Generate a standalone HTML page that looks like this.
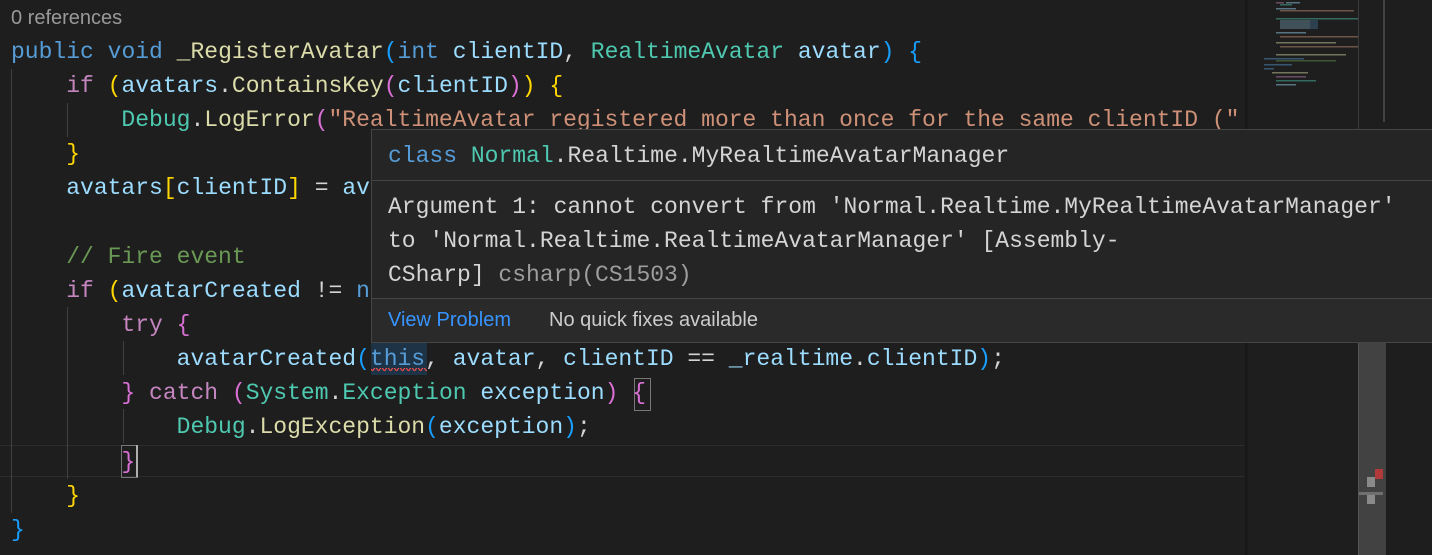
<!DOCTYPE html>
<html><head><meta charset="utf-8"><style>
body{margin:0;width:1432px;height:555px;background:#1e1e1e;overflow:hidden;position:relative;font-family:"Liberation Mono",monospace;}
.code{position:absolute;left:0;top:0;width:1245px;height:555px;overflow:hidden;}
.ln{position:absolute;left:11px;white-space:pre;font-size:23px;line-height:34px;color:#d4d4d4;}
.ref{position:absolute;left:11px;top:7px;font-family:"Liberation Sans",sans-serif;font-size:20px;color:#999;}
.k{color:#569cd6}.c{color:#c586c0}.t{color:#4ec9b0}.f{color:#dcdcaa}.v{color:#9cdcfe}.s{color:#ce9178}.cm{color:#6a9955}
.b1{color:#ffd700}.b2{color:#da70d6}.b3{color:#179fff}
.g{position:absolute;width:1px;background:#404040}
.hover{position:absolute;left:371px;top:129px;width:1070px;height:212px;background:#252526;border:1px solid #454545;font-size:23px;color:#d4d4d4;}
.hover .r{position:absolute;left:16px;white-space:pre;line-height:34px;}
.bar{position:absolute;left:0;right:0;top:168px;bottom:0;background:#2a2a2b;border-top:1px solid #454545;font-family:"Liberation Sans",sans-serif;font-size:20px;}
</style></head><body>
<div class="code">
<div style="position:absolute;left:0;top:445px;width:1245px;height:30px;border-top:1px solid #2c2c2c;border-bottom:1px solid #2c2c2c"></div>
<div class="g" style="left:11px;top:69px;height:444px"></div>
<div class="g" style="left:67px;top:103px;height:34px"></div>
<div class="g" style="left:67px;top:307px;height:172px"></div>
<div class="g" style="left:123px;top:341px;height:34px"></div>
<div class="g" style="left:123px;top:409px;height:34px"></div>
<div class="ref">0 references</div>
<div class="ln" style="top:35px"><span class="k">public</span> <span class="k">void</span> <span class="f">_RegisterAvatar</span><span class="b3">(</span><span class="k">int</span> <span class="v">clientID</span>, <span class="t">RealtimeAvatar</span> <span class="v">avatar</span><span class="b3">)</span> <span class="b3">{</span></div>
<div class="ln" style="top:69px">    <span class="c">if</span> <span class="b1">(</span><span class="v">avatars</span>.<span class="f">ContainsKey</span><span class="b2">(</span><span class="v">clientID</span><span class="b2">)</span><span class="b1">)</span> <span class="b1">{</span></div>
<div class="ln" style="top:103px">        <span class="t">Debug</span>.<span class="f">LogError</span><span class="b2">(</span><span class="s">"RealtimeAvatar registered more than once for the same clientID ("</span> + clientID</div>
<div class="ln" style="top:137px">    <span class="b1">}</span></div>
<div class="ln" style="top:171px">    <span class="v">avatars</span><span class="b1">[</span><span class="v">clientID</span><span class="b1">]</span> = <span class="v">avatar</span>;</div>
<div class="ln" style="top:240px">    <span class="cm">// Fire event</span></div>
<div class="ln" style="top:274px">    <span class="c">if</span> <span class="b1">(</span><span class="v">avatarCreated</span> != <span class="k">null</span><span class="b1">)</span> <span class="b1">{</span></div>
<div class="ln" style="top:308px">        <span class="c">try</span> <span class="b2">{</span></div>
<div style="position:absolute;left:371px;top:343px;width:56px;height:32px;background:#1f3346"></div>
<svg style="position:absolute;left:371px;top:368px" width="56" height="5"><path d="M0 1 Q1.5 4 3 1 T6 1 T9 1 T12 1 T15 1 T18 1 T21 1 T24 1 T27 1 T30 1 T33 1 T36 1 T39 1 T42 1 T45 1 T48 1 T51 1 T54 1 T57 1" fill="none" stroke="#f14c4c" stroke-width="1.2"/></svg>
<div class="ln" style="top:342px">            <span class="v">avatarCreated</span><span class="b3">(</span><span class="k">this</span>, <span class="v">avatar</span>, <span class="v">clientID</span> == <span class="v">_realtime</span>.<span class="v">clientID</span><span class="b3">)</span>;</div>
<div style="position:absolute;left:634px;top:378px;width:15px;height:31px;border:1px solid #777"></div>
<div class="ln" style="top:376px">        <span class="b2">}</span> <span class="c">catch</span> <span class="b2">(</span><span class="t">System</span>.<span class="t">Exception</span> <span class="v">exception</span><span class="b2">)</span> <span class="b2">{</span></div>
<div class="ln" style="top:410px">            <span class="t">Debug</span>.<span class="f">LogException</span><span class="b3">(</span><span class="v">exception</span><span class="b3">)</span>;</div>
<div style="position:absolute;left:121px;top:445px;width:15px;height:31px;border:1px solid #777"></div>
<div style="position:absolute;left:136px;top:445px;width:2px;height:32px;background:#aeafad"></div>
<div class="ln" style="top:445px">        <span class="b2">}</span></div>
<div class="ln" style="top:479px">    <span class="b1">}</span></div>
<div class="ln" style="top:513px"><span class="b3">}</span></div>
</div>
<div style="position:absolute;left:1245px;top:0;width:4px;height:555px;background:linear-gradient(90deg,#151515,#1e1e1e)"></div>
<svg style="position:absolute;left:1250px;top:0" width="108" height="100">
<g opacity=".45">
<rect x="26" y="2" width="8" height="1.5" fill="#c586c0"/><rect x="36" y="2" width="14" height="1.5" fill="#9cdcfe"/>
<rect x="30" y="4" width="12" height="1.5" fill="#4ec9b0"/>
<rect x="26" y="8" width="20" height="1.5" fill="#9cdcfe"/><rect x="30" y="10" width="74" height="1.5" fill="#ce9178"/>
<rect x="26" y="18" width="90" height="1.5" fill="#4ec9b0"/><rect x="30" y="20" width="30" height="9" fill="#9cdcfe" opacity=".6"/><rect x="60" y="20" width="8" height="9" fill="#569cd6" opacity=".6"/>
<rect x="26" y="32" width="30" height="1.5" fill="#9cdcfe"/><rect x="30" y="36" width="84" height="1.5" fill="#ce9178"/>
<rect x="26" y="42" width="60" height="1.5" fill="#dcdcaa"/><rect x="30" y="46" width="84" height="1.5" fill="#ce9178"/>
<rect x="26" y="54" width="70" height="1.5" fill="#dcdcaa"/><rect x="14" y="58" width="40" height="1.5" fill="#569cd6"/><rect x="26" y="60" width="60" height="1.5" fill="#6a9955"/>
<rect x="14" y="64" width="28" height="1.5" fill="#569cd6"/><rect x="14" y="68" width="10" height="1.5" fill="#569cd6"/>
<rect x="22" y="72" width="36" height="1.5" fill="#dcdcaa"/><rect x="26" y="76" width="30" height="1.5" fill="#c586c0"/>
<rect x="26" y="80" width="40" height="1.5" fill="#4ec9b0"/><rect x="26" y="84" width="20" height="1.5" fill="#9cdcfe"/>
</g></svg>
<div style="position:absolute;left:1358px;top:0;width:1px;height:555px;background:#3a3a3a"></div>
<div style="position:absolute;left:1383px;top:0;width:2px;height:122px;background:#424242"></div>
<div style="position:absolute;left:1358px;top:322px;width:27px;height:233px;background:#424242;border-left:1px solid #555"></div>
<div style="position:absolute;left:1375px;top:469px;width:8px;height:10px;background:#b03a3a"></div>
<div style="position:absolute;left:1367px;top:477px;width:8px;height:10px;background:#8a8a8a"></div>
<div style="position:absolute;left:1359px;top:492px;width:24px;height:3px;background:#707070"></div>
<div style="position:absolute;left:1367px;top:495px;width:8px;height:9px;background:#8a8a8a"></div>
<div class="hover">
<div class="r" style="top:9px"><span class="k">class</span> <span class="t">Normal</span>.Realtime.MyRealtimeAvatarManager</div>
<div style="position:absolute;left:0;right:0;top:50px;border-top:1px solid #454545"></div>
<div class="r" style="top:60px">Argument 1: cannot convert from 'Normal.Realtime.MyRealtimeAvatarManager'</div>
<div class="r" style="top:94px">to 'Normal.Realtime.RealtimeAvatarManager' [Assembly-</div>
<div class="r" style="top:128px">CSharp] <span style="color:#9d9d9d">csharp(CS1503)</span></div>
<div class="bar">
<span style="position:absolute;left:16px;top:10px;color:#3794ff">View Problem</span>
<span style="position:absolute;left:177px;top:10px;color:#cccccc">No quick fixes available</span>
</div>
</div>
</body></html>
